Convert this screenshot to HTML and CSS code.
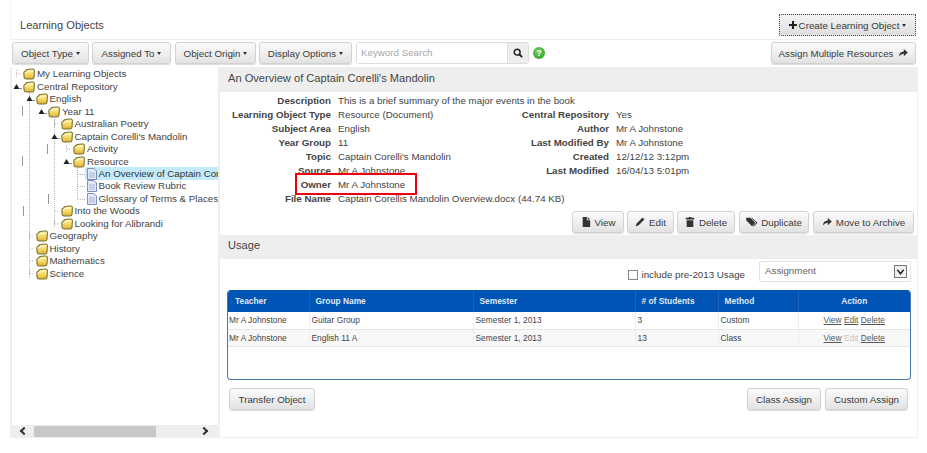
FILE: index.html
```html
<!DOCTYPE html>
<html lang="en">
<head>
<meta charset="utf-8">
<title>Learning Objects</title>
<link rel="stylesheet" href="styles.css">
</head>
<body>
<svg class="defs" width="0" height="0" aria-hidden="true">
  <defs>
    <linearGradient id="gold" x1="0" y1="0" x2="0" y2="1">
      <stop offset="0" stop-color="#fff0a6"/>
      <stop offset=".55" stop-color="#f5d766"/>
      <stop offset="1" stop-color="#dcae34"/>
    </linearGradient>
  </defs>
  <symbol id="folder" viewBox="0 0 12 12">
    <path d="M.8 5 Q.8 3.4 2.3 3.2 L3.5 1.8 Q7 .7 10 1 Q11.5 1.2 11.4 3 L11 9.3 Q10.8 11 9 11 L3.2 11 Q1.3 11 1.1 9.3 Z" fill="url(#gold)" stroke="#77722f" stroke-width="1.1"/>
    <path d="M2 4.6 Q5.5 3.2 10.4 3" fill="none" stroke="#fff8cf" stroke-width="1"/>
  </symbol>
  <symbol id="doc" viewBox="0 0 12 12">
    <path d="M1.5 .5 H8 L10.5 3 V11.5 H1.5 Z" fill="#e3e8f6" stroke="#7f8fc0"/>
    <path d="M3 5 H9 M3 7 H9 M3 9 H9" stroke="#aab6dc" stroke-width="1"/>
  </symbol>
  <symbol id="open" viewBox="0 0 10 10">
    <path d="M3.5 2 L6.5 7 H.5 Z" fill="#222"/><path d="M6 6.5 H9" stroke="#888"/>
  </symbol>
  <symbol id="closed" viewBox="0 0 10 10">
    <path d="M3.5 1 V9 M4 5 H8" stroke="#bbb" stroke-dasharray="1 1"/>
  </symbol>
  <symbol id="i-file" viewBox="0 0 12 12"><path d="M2 0 H7 V4 H11 V12 H2 Z M8 0 L11 3 H8 Z" fill="#333"/></symbol>
  <symbol id="i-pencil" viewBox="0 0 12 12"><path d="M9 .7 L11.3 3 L4 10.3 L.8 11.2 L1.7 8 Z" fill="#333"/></symbol>
  <symbol id="i-trash" viewBox="0 0 12 12"><path d="M4.5 0 H7.5 V1 H11 V3 H1 V1 H4.5 Z M2 4 H10 V12 H2 Z" fill="#333"/></symbol>
  <symbol id="i-tags" viewBox="0 0 14 12"><path d="M0 1 H5 L11 7 L7 11 L0 4 Z M7 1 L13.5 7 L9 11.5 L8 10.8 L12 7 L6 1 Z" fill="#333"/></symbol>
  <symbol id="i-share" viewBox="0 0 12 10"><path d="M7 0 L12 4.5 L7 9 V6 Q3 6 1 9.5 Q1 3.5 7 3 Z" fill="#333"/></symbol>
  <symbol id="i-plus" viewBox="0 0 10 10"><path d="M3.7 0 H6.3 V3.7 H10 V6.3 H6.3 V10 H3.7 V6.3 H0 V3.7 H3.7 Z" fill="#222"/></symbol>
  <symbol id="i-search" viewBox="0 0 12 12"><circle cx="5" cy="5" r="3.5" fill="none" stroke="#222" stroke-width="1.8"/><path d="M7.5 7.5 L11 11" stroke="#222" stroke-width="2.2"/></symbol>
</svg>

<div class="app">
  <header class="topbar">
    <h1 class="page-title">Learning Objects</h1>
    <button class="btn btn-focus"><svg class="ico ico-plus"><use href="#i-plus"/></svg>Create Learning Object<span class="caret"></span></button>
  </header>

  <div class="toolbar">
    <button class="btn tb-type">Object Type<span class="caret"></span></button>
    <button class="btn tb-assigned">Assigned To<span class="caret"></span></button>
    <button class="btn tb-origin">Object Origin<span class="caret"></span></button>
    <button class="btn tb-display">Display Options<span class="caret"></span></button>
    <div class="search">
      <span class="search-input">Keyword Search</span>
      <span class="search-btn"><svg class="ico-search"><use href="#i-search"/></svg></span>
    </div>
    <span class="help">?</span>
    <button class="btn tb-assign">Assign Multiple Resources<svg class="ico ico-after"><use href="#i-share"/></svg></button>
  </div>

  <div class="main">
    <aside class="side">
      <div class="tree">
        <div class="row"><svg class="tg"><use href="#closed"/></svg><svg class="fi"><use href="#folder"/></svg><span>My Learning Objects</span></div>
        <div class="row"><svg class="tg"><use href="#open"/></svg><svg class="fi"><use href="#folder"/></svg><span>Central Repository</span></div>
        <div class="sub line-a">
          <div class="row"><svg class="tg"><use href="#open"/></svg><svg class="fi"><use href="#folder"/></svg><span>English</span></div>
          <div class="sub">
            <div class="row"><i class="tick tick-a"></i><svg class="tg"><use href="#open"/></svg><svg class="fi"><use href="#folder"/></svg><span>Year 11</span></div>
            <div class="sub line-b">
              <div class="row"><svg class="tg"><use href="#closed"/></svg><svg class="fi"><use href="#folder"/></svg><span>Australian Poetry</span></div>
              <div class="row"><svg class="tg"><use href="#open"/></svg><svg class="fi"><use href="#folder"/></svg><span>Captain Corelli's Mandolin</span></div>
              <div class="sub">
                <div class="row"><i class="tick tick-b"></i><svg class="tg"><use href="#closed"/></svg><svg class="fi"><use href="#folder"/></svg><span>Activity</span></div>
                <div class="row"><i class="tick tick-c"></i><svg class="tg"><use href="#open"/></svg><svg class="fi"><use href="#folder"/></svg><span>Resource</span></div>
                <div class="sub line-c">
                  <div class="row leaf"><span class="tg"></span><span class="sel"><svg class="fi"><use href="#doc"/></svg><span>An Overview of Captain Corelli's Mandolin</span></span></div>
                  <div class="row leaf"><span class="tg"></span><svg class="fi"><use href="#doc"/></svg><span>Book Review Rubric</span></div>
                  <div class="row leaf"><i class="tick tick-d"></i><span class="tg"></span><svg class="fi"><use href="#doc"/></svg><span>Glossary of Terms &amp; Places</span></div>
                </div>
              </div>
              <div class="row"><i class="tick tick-e"></i><svg class="tg"><use href="#closed"/></svg><svg class="fi"><use href="#folder"/></svg><span>Into the Woods</span></div>
              <div class="row"><svg class="tg"><use href="#closed"/></svg><svg class="fi"><use href="#folder"/></svg><span>Looking for Alibrandi</span></div>
            </div>
          </div>
          <div class="row"><svg class="tg"><use href="#closed"/></svg><svg class="fi"><use href="#folder"/></svg><span>Geography</span></div>
          <div class="row"><svg class="tg"><use href="#closed"/></svg><svg class="fi"><use href="#folder"/></svg><span>History</span></div>
          <div class="row"><svg class="tg"><use href="#closed"/></svg><svg class="fi"><use href="#folder"/></svg><span>Mathematics</span></div>
          <div class="row"><svg class="tg"><use href="#closed"/></svg><svg class="fi"><use href="#folder"/></svg><span>Science</span></div>
        </div>
      </div>
      <div class="hscroll">
        <span class="chev chev-l"></span>
        <span class="thumb"></span>
        <span class="chev chev-r"></span>
      </div>
    </aside>

    <section class="content">
      <h2 class="panel-title">An Overview of Captain Corelli's Mandolin</h2>
      <div class="details">
        <dl class="meta">
          <dt>Description</dt><dd class="wide">This is a brief summary of the major events in the book</dd>
          <dt>Learning Object Type</dt><dd>Resource (Document)</dd><dt>Central Repository</dt><dd>Yes</dd>
          <dt>Subject Area</dt><dd>English</dd><dt>Author</dt><dd>Mr A Johnstone</dd>
          <dt>Year Group</dt><dd>11</dd><dt>Last Modified By</dt><dd>Mr A Johnstone</dd>
          <dt>Topic</dt><dd>Captain Corelli's Mandolin</dd><dt>Created</dt><dd>12/12/12 3:12pm</dd>
          <dt>Source</dt><dd>Mr A Johnstone</dd><dt>Last Modified</dt><dd>16/04/13 5:01pm</dd>
          <dt>Owner</dt><dd class="wide">Mr A Johnstone</dd>
          <dt>File Name</dt><dd class="wide">Captain Corellis Mandolin Overview.docx (44.74 KB)</dd>
        </dl>
        <div class="highlight"></div>
        <div class="actions">
          <button class="btn act-view"><svg class="ico"><use href="#i-file"/></svg>View</button>
          <button class="btn act-edit"><svg class="ico"><use href="#i-pencil"/></svg>Edit</button>
          <button class="btn act-del"><svg class="ico"><use href="#i-trash"/></svg>Delete</button>
          <button class="btn act-dup"><svg class="ico ico-wide"><use href="#i-tags"/></svg>Duplicate</button>
          <button class="btn act-move"><svg class="ico ico-share"><use href="#i-share"/></svg>Move to Archive</button>
        </div>
      </div>

      <h2 class="panel-title usage-title">Usage</h2>
      <div class="usage">
        <div class="filters">
          <label class="check"><span class="box"></span>include pre-2013 Usage</label>
          <div class="select">Assignment<span class="select-arrow"><svg viewBox="0 0 10 8"><path d="M1.5 1.5 L5 6 L8.5 1.5" fill="none" stroke="#222" stroke-width="1.6"/></svg></span></div>
        </div>
        <div class="grid-wrap">
          <table class="grid">
            <colgroup><col class="c1"><col class="c2"><col class="c3"><col class="c4"><col class="c5"><col class="c6"></colgroup>
            <thead><tr><th>Teacher</th><th>Group Name</th><th>Semester</th><th># of Students</th><th>Method</th><th class="center">Action</th></tr></thead>
            <tbody>
              <tr><td>Mr A Johnstone</td><td>Guitar Group</td><td>Semester 1, 2013</td><td>3</td><td>Custom</td><td class="center"><a>View</a> <a>Edit</a> <a>Delete</a></td></tr>
              <tr class="alt"><td>Mr A Johnstone</td><td>English 11 A</td><td>Semester 1, 2013</td><td>13</td><td>Class</td><td class="center"><a>View</a> <a class="off">Edit</a> <a>Delete</a></td></tr>
            </tbody>
          </table>
        </div>
        <div class="foot">
          <button class="btn foot-transfer">Transfer Object</button>
          <div class="foot-right">
            <button class="btn foot-class">Class Assign</button>
            <button class="btn foot-custom">Custom Assign</button>
          </div>
        </div>
      </div>
    </section>
  </div>
</div>
</body>
</html>
```

FILE: styles.css
```css
* { box-sizing: border-box; }
html, body { margin: 0; padding: 0; background: #fff; }
body { font-family: "Liberation Sans", Arial, sans-serif; color: #3f3f3f; font-size: 9.75px; width: 927px; height: 453px; overflow: hidden; }
.defs { position: absolute; }

.app { width: 908px; margin-left: 10px; height: 438px; display: flex; flex-direction: column; }

.topbar { height: 40px; padding: 14px 2px 0 9px; display: flex; justify-content: space-between; align-items: flex-start; border-bottom: 1px solid #eee; border-left: 1px solid #f6f6f6; }
.page-title { margin: 4px 0 0; font-size: 11.1px; font-weight: normal; color: #444; line-height: 14px; }

.btn { font: inherit; font-size: 9.75px; color: #3a3a3a; height: 22px; padding: 0; display: inline-flex; align-items: center; justify-content: center; background: linear-gradient(#fbfbfb, #e2e2e2); border: 1px solid #d2d2d2; border-radius: 3px; box-shadow: 0 1px 1px rgba(0,0,0,.14); white-space: nowrap; }
.btn-focus { width: 137px; border: 1px dotted #444; border-radius: 1px; box-shadow: none; background: linear-gradient(#f3f3f3, #dfdfdf); }
.caret { display: inline-block; margin-left: 3px; border-left: 2.5px solid transparent; border-right: 2.5px solid transparent; border-top: 3px solid #333; }
.ico { width: 10px; height: 10px; margin-right: 4px; flex: none; }
.ico-plus { width: 8px; height: 8px; margin-right: 2px; }
.ico-wide { width: 12px; margin-right: 3px; }
.ico-share { height: 8px; }
.ico-after { margin: 0 0 0 5px; height: 8px; }

.toolbar { height: 27px; padding: 2px 2px 0 2px; display: flex; align-items: flex-start; }
.tb-type { width: 77px; }
.tb-assigned { width: 79px; margin-left: 3px; }
.tb-origin { width: 81px; margin-left: 4px; }
.tb-display { width: 93px; margin-left: 3px; }
.search { display: flex; width: 173px; height: 22px; margin-left: 4px; border: 1px solid #dcdcdc; border-radius: 3px; }
.search-input { flex: 1; padding: 3px 0 0 4px; color: #a6a6a6; line-height: 14px; background: #fff; }
.search-btn { width: 21px; background: #eee; border-left: 1px solid #ddd; display: flex; align-items: center; justify-content: center; }
.ico-search { width: 10px; height: 10px; }
.help { width: 12px; height: 12px; margin: 5px 0 0 4px; border-radius: 50%; background: radial-gradient(circle at 40% 35%, #6fd05a, #2a9a22); color: #fff; font-size: 9px; font-weight: bold; line-height: 12px; text-align: center; }
.tb-assign { width: 145px; margin-left: auto; }

.main { flex: 1; display: flex; min-height: 0; background: #eee; padding-left: 2px; padding-right: 1px; padding-bottom: 1px; }
.side { width: 206px; display: flex; flex-direction: column; background: #fff; margin-right: 2px; }
.tree { flex: 1; overflow: hidden; padding-top: 1px; color: #444; }
.row { position: relative; height: 12.47px; display: flex; align-items: center; padding-left: 1px; white-space: nowrap; line-height: 12px; }
.tg { display: block; width: 10px; height: 10px; flex: none; }
.fi { display: block; width: 12px; height: 12px; flex: none; margin-right: 2px; }
.leaf .fi { margin-right: 1px; }
.leaf::before { content: ""; position: absolute; left: 3px; top: 6px; width: 7px; border-top: 1px dotted #b5b5b5; }
.sub { position: relative; padding-left: 12.5px; }
.line-a::before, .line-b::before, .line-c::before { content: ""; position: absolute; top: 0; border-left: 1px dotted #b5b5b5; }
.line-a::before { left: 17px; bottom: 6px; }
.line-b::before { left: 17px; bottom: 6px; top: -2px; }
.line-c::before { left: 15px; bottom: 6px; top: -1px; }
.tick { position: absolute; width: 1px; height: 10px; top: 1px; background: #999; }
.tick-a { left: -15px; }
.tick-b { left: -15px; }
.tick-c { left: -40px; }
.tick-d { left: -27px; }
.tick-e { left: -27px; }
.sel { display: flex; align-items: center; background: #c4ebfb; color: #333; height: 13px; margin-left: -1px; padding-left: 1px; }

.hscroll { height: 12px; flex: none; margin-left: -2px; background: #eee; display: flex; align-items: center; position: relative; }
.thumb { width: 122px; height: 11px; background: #c8c8c8; margin-left: 3px; }
.chev { width: 6px; height: 6px; border-left: 2px solid #333; border-bottom: 2px solid #333; flex: none; }
.chev-l { transform: rotate(45deg); margin-left: 11px; margin-right: 4px; }
.chev-r { transform: rotate(225deg); margin-left: 45px; }

.content { flex: 1; display: flex; flex-direction: column; background: #fff; min-width: 0; }
.panel-title { margin: 0; height: 25px; background: #eee; padding: 0 0 0 8px; font-size: 11.1px; font-weight: normal; line-height: 22px; color: #444; flex: none; }
.usage-title { height: 24px; line-height: 20px; }
.details { position: relative; height: 143px; padding-top: 2px; flex: none; }
.meta { margin: 0; display: grid; grid-template-columns: 111px 160px 104px 1fr; column-gap: 7px; grid-auto-rows: 13.95px; line-height: 14px; }
.meta dt { font-weight: bold; text-align: right; color: #444; white-space: nowrap; }
.meta dd { margin: 0; white-space: nowrap; color: #444; }
.meta .wide { grid-column: 2 / -1; }
.highlight { position: absolute; left: 75px; top: 81px; width: 122px; height: 22px; border: 2px solid #ee0010; }
.actions { position: absolute; right: 3px; top: 119px; display: flex; gap: 3px; }
.act-view { width: 52px; }
.act-edit { width: 47px; }
.act-del { width: 58px; }
.act-dup { width: 70px; margin-left: 1px; }
.act-move { width: 101px; margin-left: 1px; }

.usage { flex: 1; display: flex; flex-direction: column; padding: 2px 6px 0 7px; }
.filters { height: 29px; display: flex; justify-content: flex-end; align-items: flex-start; }
.check { display: flex; align-items: center; margin: 7px 14px 0 0; line-height: 14px; }
.box { width: 10px; height: 10px; border: 1px solid #888; margin-right: 3px; background: #fff; }
.select { width: 152px; height: 21px; border: 1px solid #e2e2e2; border-radius: 2px; padding: 2px 0 0 5px; line-height: 14px; color: #666; position: relative; }
.select-arrow { position: absolute; right: 3px; top: 3px; width: 13px; height: 13px; border: 1px solid #777; background: #f0f0f0; display: flex; align-items: center; justify-content: center; }
.select-arrow svg { width: 9px; height: 8px; }

.grid-wrap { height: 90px; border: 1px solid #4679ad; border-top: 0; border-radius: 4px; overflow: hidden; flex: none; width: 684px; }
.grid { width: 100%; border-collapse: collapse; table-layout: fixed; font-size: 8.4px; color: #444; }
.c1 { width: 81px; } .c2 { width: 164px; } .c3 { width: 162px; } .c4 { width: 83px; } .c5 { width: 80px; } .c6 { width: auto; }
.grid th { height: 22px; background: #0054b6; color: #dfe9f5; text-align: left; padding: 0 0 0 6px; font-weight: bold; border-right: 1px solid #1a63b8; }
.grid th:first-child { padding-left: 7px; }
.grid th:last-child, .grid td:last-child { border-right: 0; }
.grid td { height: 17px; padding: 0 0 0 2px; border-right: 1px solid #eee; border-bottom: 1px solid #e6e6e6; white-space: nowrap; }
.grid td:first-child { padding-left: 1px; }
.grid .alt td { background: #f8f8f8; }
.grid .center { text-align: center; padding-left: 0; }
.grid th.center { padding-left: 0; }
.grid a { text-decoration: underline; color: #555; }
.grid a.off { color: #c4c4c4; text-decoration: none; }

.foot { display: flex; justify-content: space-between; padding: 8px 3px 0 2px; }
.foot-right { display: flex; gap: 4px; }
.foot-transfer { width: 86px; }
.foot-class { width: 74px; }
.foot-custom { width: 83px; }
```
